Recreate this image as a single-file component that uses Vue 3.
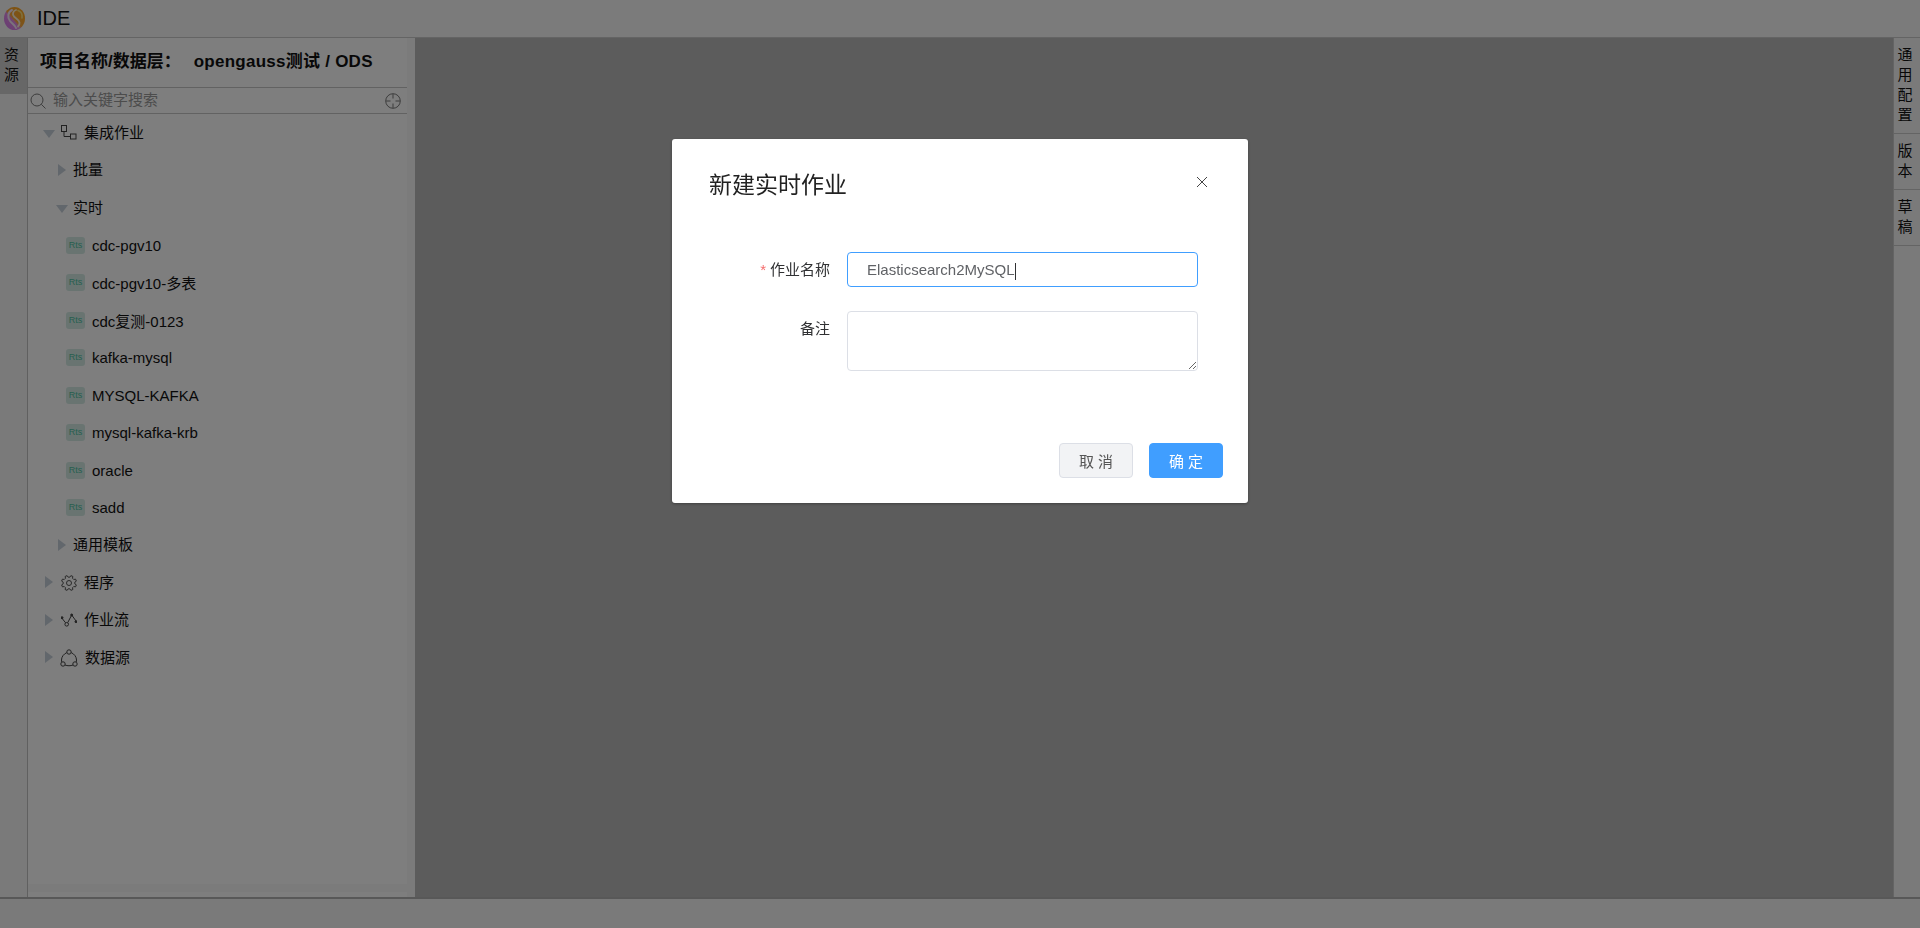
<template>
  <div class="page">
    <header class="topbar">
      <svg class="logo" viewBox="0 0 21 23" fill="none" stroke-linecap="round">
        <defs>
          <linearGradient id="lg" x1="0.85" y1="0.15" x2="0.15" y2="0.85">
            <stop offset="0" stop-color="#ffa51e" />
            <stop offset="0.52" stop-color="#f9a83a" />
            <stop offset="0.62" stop-color="#e089e6" />
            <stop offset="1" stop-color="#d67de8" />
          </linearGradient>
        </defs>
        <ellipse cx="10.5" cy="11.5" rx="10.5" ry="11.5" fill="url(#lg)" />
        <path d="M8 3C4 5 3 10 6 14c2 2.500 5 4 6 7" stroke="#f7e6f8" stroke-width="2" />
        <path d="M12 3c-3 1-4 4-2 6.500 2 2 5 3 5.500 6 .2 1.500-.5 3-1.500 4" stroke="#fff0d8" stroke-width="1.800" />
        <path d="M14 3.500c3 1 4.500 4 4 7.500" stroke="#ffe27a" stroke-width="1.600" />
      </svg>
      <span class="app-name">IDE</span>
    </header>

    <div class="body">
      <nav class="side-tabs">
        <div class="side-tab active">资<br />源</div>
      </nav>

      <aside class="sidebar">
        <div class="panel">
          <div class="panel-main">
            <h3 class="project">项目名称/数据层：<span class="project-name">opengauss测试 / ODS</span></h3>
            <div class="search">
              <svg class="search-icon" viewBox="0 0 16 16" fill="none" stroke="#7a7a7a" stroke-width="1">
                <circle cx="7" cy="7" r="6" />
                <path d="M11.3 11.3L15.500 15.500" />
              </svg>
              <span class="search-text">输入关键字搜索</span>
              <svg class="locate-icon" viewBox="0 0 16 16" fill="none" stroke="#7a7a7a" stroke-width="1">
                <circle cx="8" cy="8" r="7.300" />
                <path d="M8 1v4.500M8 10.500V15M1 8h4.500M10.500 8H15" />
              </svg>
            </div>
            <ul class="tree">
              <li v-for="row in rows" :key="row.label" class="row" :class="'lv' + row.level">
                <i v-if="row.arrow" class="arrow" :class="row.arrow"></i>
                <span v-if="row.rts" class="rts">Rts</span>
                <svg v-if="row.icon === 'flow'" class="ico" viewBox="0 0 16 16" fill="none" stroke="#444" stroke-width="1">
                  <rect x="0.500" y="0.500" width="5" height="6" />
                  <rect x="9.500" y="9" width="5.500" height="5" />
                  <path d="M3 6.500V11.500H9.500" />
                </svg>
                <svg v-if="row.icon === 'gear'" class="ico" viewBox="0 0 16 16" fill="none" stroke="#555" stroke-width="1" stroke-linejoin="round">
                  <path :d="gearPath" />
                  <circle cx="8" cy="8" r="2.500" />
                </svg>
                <svg v-if="row.icon === 'line'" class="ico" viewBox="0 0 16 16" fill="#444" stroke="#444" stroke-width="1">
                  <path d="M.5 5.700L4.600 10.800M6.800 10.500L10.700 3L15.500 9.700" fill="none" />
                  <circle cx="1" cy="5.700" r="1" />
                  <circle cx="5.700" cy="12.300" r="1.800" fill="none" />
                  <circle cx="10.700" cy="3" r="1" />
                  <circle cx="15" cy="9.700" r="1" />
                </svg>
                <svg v-if="row.icon === 'source'" class="ico source" viewBox="0 0 18 18" fill="none" stroke="#444" stroke-width="1">
                  <path d="M6.800 3.600C3.700 5 1.500 7.800 1.500 11c0 .8.100 1.400.300 2M11.200 3.600c3.100 1.400 5.300 4.200 5.300 7.400 0 .8-.100 1.400-.300 2M5 16c2.400 1 5.600 1 8 0" />
                  <circle cx="9" cy="3" r="2.200" />
                  <circle cx="3" cy="15" r="2.200" />
                  <circle cx="15" cy="15" r="2.200" />
                </svg>
                <span class="row-label">{{ row.label }}</span>
              </li>
            </ul>
          </div>
          <div class="hscroll"></div>
        </div>
      </aside>

      <main class="workspace"></main>

      <nav class="right-tabs">
        <div class="right-tab">通<br />用<br />配<br />置</div>
        <div class="right-tab">版<br />本</div>
        <div class="right-tab">草<br />稿</div>
      </nav>
    </div>

    <footer class="statusbar"></footer>

    <div class="overlay">
      <div class="dialog">
        <div class="dialog-head">
          <span class="dialog-title">新建实时作业</span>
          <svg class="close" viewBox="0 0 12 12" stroke="#444" stroke-width="1">
            <path d="M1 1l10 10M11 1L1 11" />
          </svg>
        </div>
        <form class="form" @submit.prevent>
          <div class="form-row">
            <label class="form-label"><em>*</em>作业名称</label>
            <div class="fake-input">Elasticsearch2MySQL<i class="caret"></i></div>
          </div>
          <div class="form-row">
            <label class="form-label">备注</label>
            <textarea class="area"></textarea>
          </div>
        </form>
        <div class="dialog-foot">
          <button type="button" class="btn">取 消</button>
          <button type="button" class="btn primary">确 定</button>
        </div>
      </div>
    </div>
  </div>
</template>

<script setup>
const rows = [
  { label: '集成作业', level: 0, arrow: 'down', icon: 'flow' },
  { label: '批量', level: 1, arrow: 'right' },
  { label: '实时', level: 1, arrow: 'down' },
  { label: 'cdc-pgv10', level: 2, rts: true },
  { label: 'cdc-pgv10-多表', level: 2, rts: true },
  { label: 'cdc复测-0123', level: 2, rts: true },
  { label: 'kafka-mysql', level: 2, rts: true },
  { label: 'MYSQL-KAFKA', level: 2, rts: true },
  { label: 'mysql-kafka-krb', level: 2, rts: true },
  { label: 'oracle', level: 2, rts: true },
  { label: 'sadd', level: 2, rts: true },
  { label: '通用模板', level: 1, arrow: 'right' },
  { label: '程序', level: 0, arrow: 'right', icon: 'gear' },
  { label: '作业流', level: 0, arrow: 'right', icon: 'line' },
  { label: '数据源', level: 0, arrow: 'right', icon: 'source' }
]

// outline of an 8-tooth gear in a 16x16 box
function makeGear() {
  const pt = (r, deg) => {
    const a = (deg * Math.PI) / 180
    return (8 + r * Math.cos(a)).toFixed(2) + ' ' + (8 + r * Math.sin(a)).toFixed(2)
  }
  const pts = []
  for (let k = 0; k < 8; k++) {
    const a = k * 45 + 22.5
    pts.push(pt(5.9, a - 14), pt(7.6, a - 8), pt(7.6, a + 8), pt(5.9, a + 14))
  }
  return 'M' + pts.join('L') + 'Z'
}
const gearPath = makeGear()
</script>

<style>
html, body {
  margin: 0;
  overflow: hidden;
}
</style>

<style scoped>
.page {
  height: 928px;
  display: flex;
  flex-direction: column;
  background: #f5f5f5;
  color: #111;
  font-family: "Liberation Sans", "Noto Sans CJK SC", sans-serif;
  font-size: 15px;
}

.topbar {
  height: 37px;
  flex: none;
  display: flex;
  align-items: center;
  padding-left: 4px;
  background: #f6f6f6;
  border-bottom: 1px solid #c8c8c8;
}

.logo {
  width: 21px;
  height: 23px;
}

.app-name {
  margin-left: 12px;
  font-size: 20px;
}

.body {
  flex: 1;
  min-height: 0;
  display: flex;
}

.side-tabs {
  width: 27px;
  flex: none;
  background: #f5f5f5;
  border-right: 1px solid #c0c0c0;
}

.side-tab {
  height: 56px;
  box-sizing: border-box;
  padding: 7px 4px 0 0;
  text-align: center;
  line-height: 20px;
}

.side-tab.active {
  background: #cfcfcf;
}

.sidebar {
  width: 387px;
  flex: none;
  background: #f6f6f6;
  padding-right: 8px;
  box-sizing: border-box;
  display: flex;
}

.panel {
  flex: 1;
  min-width: 0;
  display: flex;
  flex-direction: column;
  background: #fcfcfc;
  padding-bottom: 5px;
}

.panel-main {
  flex: 1;
  min-height: 0;
}

.hscroll {
  height: 8px;
  flex: none;
  background: #f6f6f6;
}

.project {
  margin: 0;
  height: 49px;
  box-sizing: border-box;
  padding-left: 12px;
  font-size: 17px;
  font-weight: 700;
  line-height: 48px;
  white-space: nowrap;
}

.project-name {
  margin-left: 13px;
  letter-spacing: 0.25px;
}

.search {
  height: 27px;
  box-sizing: border-box;
  display: flex;
  align-items: center;
  padding: 0 6px 0 2px;
  border-top: 1px solid #c4c4c4;
  border-bottom: 1px solid #c4c4c4;
}

.search-icon {
  width: 16px;
  height: 16px;
}

.search-text {
  flex: 1;
  margin: -5px 0 0 7px;
  color: #999;
}

.locate-icon {
  width: 16px;
  height: 16px;
}

.tree {
  list-style: none;
  margin: 0;
  padding: 0;
}

.row {
  height: 37.5px;
  display: flex;
  align-items: center;
  position: relative;
  white-space: nowrap;
}

.lv0 {
  padding-left: 56px;
}

.lv1 {
  padding-left: 45px;
}

.lv2 {
  padding-left: 38px;
}

.lv0 .row-label,
.lv1 .row-label {
  margin-top: -3px;
}

.arrow {
  position: absolute;
  top: 50%;
  width: 0;
  height: 0;
}

.arrow.right {
  margin-top: -6.5px;
  border-top: 6.5px solid transparent;
  border-bottom: 6.5px solid transparent;
  border-left: 8px solid #c4ced8;
}

.arrow.down {
  margin-top: -3px;
  border-left: 6px solid transparent;
  border-right: 6px solid transparent;
  border-top: 8px solid #c4ced8;
}

.lv0 .arrow.right {
  left: 17px;
}

.lv0 .arrow.down {
  left: 15px;
}

.lv1 .arrow.right {
  left: 30px;
}

.lv1 .arrow.down {
  left: 28px;
}

.ico {
  position: absolute;
  left: 33px;
  top: 50%;
  width: 16px;
  height: 16px;
  margin-top: -8px;
}

.ico.source {
  left: 32px;
  width: 18px;
  height: 18px;
  margin-top: -9px;
}

.ico.source + .row-label {
  margin-left: 1px;
}

.rts {
  width: 19px;
  height: 17px;
  margin-right: 7px;
  border-radius: 3px;
  background: #d2e9e3;
  color: #4fbf9f;
  font-size: 9px;
  line-height: 17px;
  text-align: center;
}

.workspace {
  flex: 1;
  background: #b8b8b8;
}

.right-tabs {
  width: 26px;
  flex: none;
  background: #f5f5f5;
  border-left: 1px solid #c8c8c8;
}

.right-tab {
  padding: 7px 4px 8px 0;
  text-align: center;
  line-height: 20px;
  border-bottom: 1px solid #c8c8c8;
}

.statusbar {
  height: 29px;
  flex: none;
  background: #f4f4f4;
  border-top: 2px solid #b0b0b0;
}

.overlay {
  position: fixed;
  inset: 0;
  background: rgba(0, 0, 0, 0.5);
}

.dialog {
  width: 576px;
  height: 364px;
  margin: 139px auto 0;
  box-sizing: border-box;
  background: #fff;
  border-radius: 3px;
  box-shadow: 0 1px 3px rgba(0, 0, 0, 0.3);
  display: flex;
  flex-direction: column;
}

.dialog-head {
  display: flex;
  justify-content: space-between;
  align-items: center;
  padding: 30px 40px 0 37px;
  height: 30px;
}

.dialog-title {
  font-size: 23px;
  margin-top: -2px;
  color: #222;
}

.close {
  width: 12px;
  height: 12px;
  margin-top: -4px;
}

.form {
  margin-top: 53px;
}

.form-row {
  display: flex;
  margin-bottom: 24px;
}

.form-label {
  width: 175px;
  flex: none;
  padding-right: 17px;
  box-sizing: border-box;
  text-align: right;
  line-height: 35px;
  color: #303133;
}

.form-label em {
  color: #f56c6c;
  font-style: normal;
  margin-right: 4px;
}

.fake-input {
  width: 351px;
  height: 35px;
  box-sizing: border-box;
  border: 1px solid #409eff;
  border-radius: 4px;
  padding-left: 19px;
  line-height: 33px;
  color: #606266;
}

.caret {
  display: inline-block;
  width: 1px;
  height: 17px;
  background: #303133;
  vertical-align: middle;
}

.area {
  display: block;
  width: 351px;
  height: 60px;
  box-sizing: border-box;
  border: 1px solid #dcdfe6;
  border-radius: 4px;
  outline: none;
  padding: 5px 15px;
  font: inherit;
}

.dialog-foot {
  margin-top: auto;
  padding: 0 25px 25px 0;
  display: flex;
  justify-content: flex-end;
  gap: 16px;
}

.btn {
  width: 74px;
  height: 35px;
  border: 1px solid #dcdfe6;
  border-radius: 4px;
  background: #f2f3f5;
  color: #555;
  font: inherit;
  cursor: pointer;
}

.btn.primary {
  border-color: #409eff;
  background: #409eff;
  color: #fff;
}
</style>
